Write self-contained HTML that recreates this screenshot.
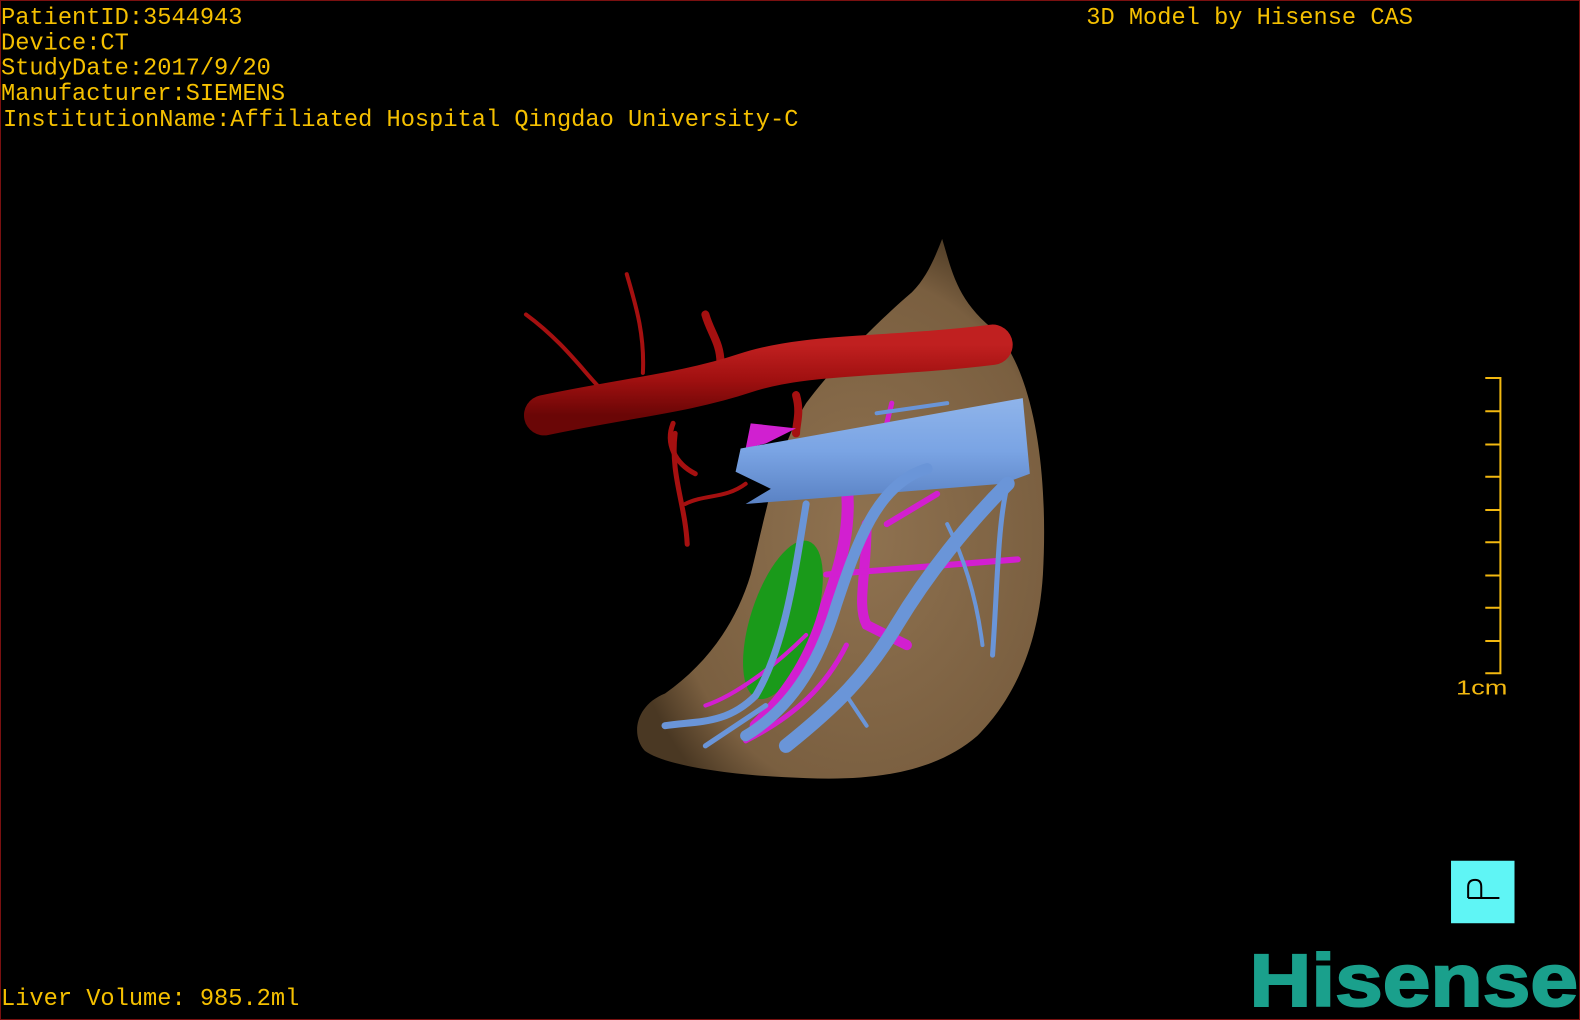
<!DOCTYPE html>
<html><head><meta charset="utf-8"><style>
html,body{margin:0;padding:0;background:#000;width:1580px;height:1020px;overflow:hidden}
svg{display:block}
</style></head><body>
<svg width="1580" height="1020" viewBox="0 0 1568 1012" preserveAspectRatio="none" xmlns="http://www.w3.org/2000/svg">
<defs>
<radialGradient id="lv" cx="0.55" cy="0.55" r="0.6">
<stop offset="0" stop-color="#8f7250"/><stop offset="0.8" stop-color="#7a5f40"/><stop offset="1" stop-color="#4a3823"/>
</radialGradient>
<linearGradient id="ivc" x1="0" y1="0" x2="0" y2="1">
<stop offset="0" stop-color="#8fb4ea"/><stop offset="0.5" stop-color="#7aa4e4"/><stop offset="1" stop-color="#5a82c4"/>
</linearGradient>
<linearGradient id="ao" x1="0" y1="0" x2="0" y2="1">
<stop offset="0" stop-color="#c02020"/><stop offset="0.5" stop-color="#a01010"/><stop offset="1" stop-color="#6a0606"/>
</linearGradient>
</defs>
<rect x="0" y="0" width="1568" height="1012" fill="#000" stroke="#7a1010" stroke-width="2"/>
<g font-family="'Liberation Mono',monospace" font-size="23.5" fill="#f5c000">
<text x="1" y="24">PatientID:3544943</text>
<text x="1" y="49">Device:CT</text>
<text x="1" y="74">StudyDate:2017/9/20</text>
<text x="1" y="99">Manufacturer:SIEMENS</text>
<text x="3" y="125">InstitutionName:Affiliated Hospital Qingdao University-C</text>
<text x="1078" y="24">3D Model by Hisense CAS</text>
<text x="1" y="997">Liver Volume: 985.2ml</text>
</g>
<!-- liver -->
<path d="M935 237 C945 270 950 300 990 330 C1030 380 1040 480 1035 570 C1030 650 1000 700 970 730 C930 765 870 775 800 772 C730 770 660 760 640 745 C626 730 630 700 660 688 C700 660 730 620 745 570 C760 510 770 450 800 400 C830 360 870 320 905 290 C920 275 928 255 935 237Z" fill="url(#lv)"/>
<!-- gallbladder -->
<ellipse cx="777" cy="615" rx="32" ry="82" transform="rotate(18 777 615)" fill="#1a9a1a"/>
<!-- aorta -->
<g fill="none" stroke="#a51010" stroke-linecap="round">
<path d="M622 272 C630 300 640 330 638 370" stroke-width="4"/>
<path d="M522 312 C560 340 580 370 600 390" stroke-width="4"/>
<path d="M700 312 C705 330 715 340 715 360" stroke-width="8"/>
<path d="M668 420 C660 440 670 460 690 470" stroke-width="5"/>
<path d="M670 430 C665 470 680 500 682 540" stroke-width="5"/>
<path d="M790 392 C795 410 790 420 790 430" stroke-width="8"/>
<path d="M680 500 C700 490 720 495 740 480" stroke-width="4"/>
<path d="M540 412 C620 395 680 390 740 370 C800 350 880 355 985 342" stroke="url(#ao)" stroke-width="40"/>
</g>
<!-- magenta -->
<path d="M745 420 L790 425 L760 440 L740 445Z" fill="#d020d0"/>
<g fill="none" stroke="#d21fd0" stroke-linecap="round">
<path d="M840 480 C845 520 835 560 820 600 C810 640 790 680 750 720" stroke-width="12"/>
<path d="M860 520 C860 570 850 600 860 620 L900 640" stroke-width="10"/>
<path d="M820 570 L1010 555" stroke-width="6"/>
<path d="M885 400 L870 460" stroke-width="5"/>
<path d="M880 520 L930 490" stroke-width="6"/>
<path d="M800 630 C770 660 730 690 700 700" stroke-width="4"/>
<path d="M840 640 C820 680 790 710 740 735" stroke-width="5"/>
</g>
<!-- IVC -->
<path d="M735 445 L1015 395 L1022 470 L995 480 L740 500 L765 485 L730 468Z" fill="url(#ivc)"/>
<!-- blue branches -->
<g fill="none" stroke="#6a95d8" stroke-linecap="round">
<path d="M920 465 C870 480 850 540 830 600 C815 650 790 700 740 730" stroke-width="11"/>
<path d="M1000 480 C960 520 920 570 890 620 C860 670 830 700 780 740" stroke-width="14"/>
<path d="M1000 480 C990 520 990 580 985 650" stroke-width="5"/>
<path d="M800 500 C790 560 780 640 750 690 C720 720 690 715 660 720" stroke-width="7"/>
<path d="M760 700 L700 740" stroke-width="5"/>
<path d="M870 410 L940 400" stroke-width="4"/>
<path d="M940 520 C960 560 970 600 975 640" stroke-width="4"/>
<path d="M840 690 L860 720" stroke-width="4"/>
</g>
<!-- ruler -->
<g stroke="#f2b810" stroke-width="2" fill="none">
<path d="M1474 375 H1489 V668 H1474"/>
<path d="M1474 408 H1489 M1474 441 H1489 M1474 473 H1489 M1474 506 H1489 M1474 538 H1489 M1474 571 H1489 M1474 603 H1489 M1474 636 H1489"/>
</g>
<text x="1445" y="689" font-family="'Liberation Sans',sans-serif" font-size="20" fill="#f2b810" textLength="51" lengthAdjust="spacingAndGlyphs">1cm</text>
<!-- cyan box -->
<rect x="1440" y="854" width="63" height="62" fill="#5ff5f5"/>
<path d="M1457 891 V880 Q1457 873 1464 873 Q1470 873 1470 880 V891 H1488 M1457 891 H1470" stroke="#000" stroke-width="2" fill="none"/>
<text x="1240" y="998" font-family="'Liberation Sans',sans-serif" font-weight="bold" font-size="74" fill="#1aa08c" stroke="#1aa08c" stroke-width="2" textLength="326" lengthAdjust="spacingAndGlyphs">Hisense</text>
</svg>
</body></html>
